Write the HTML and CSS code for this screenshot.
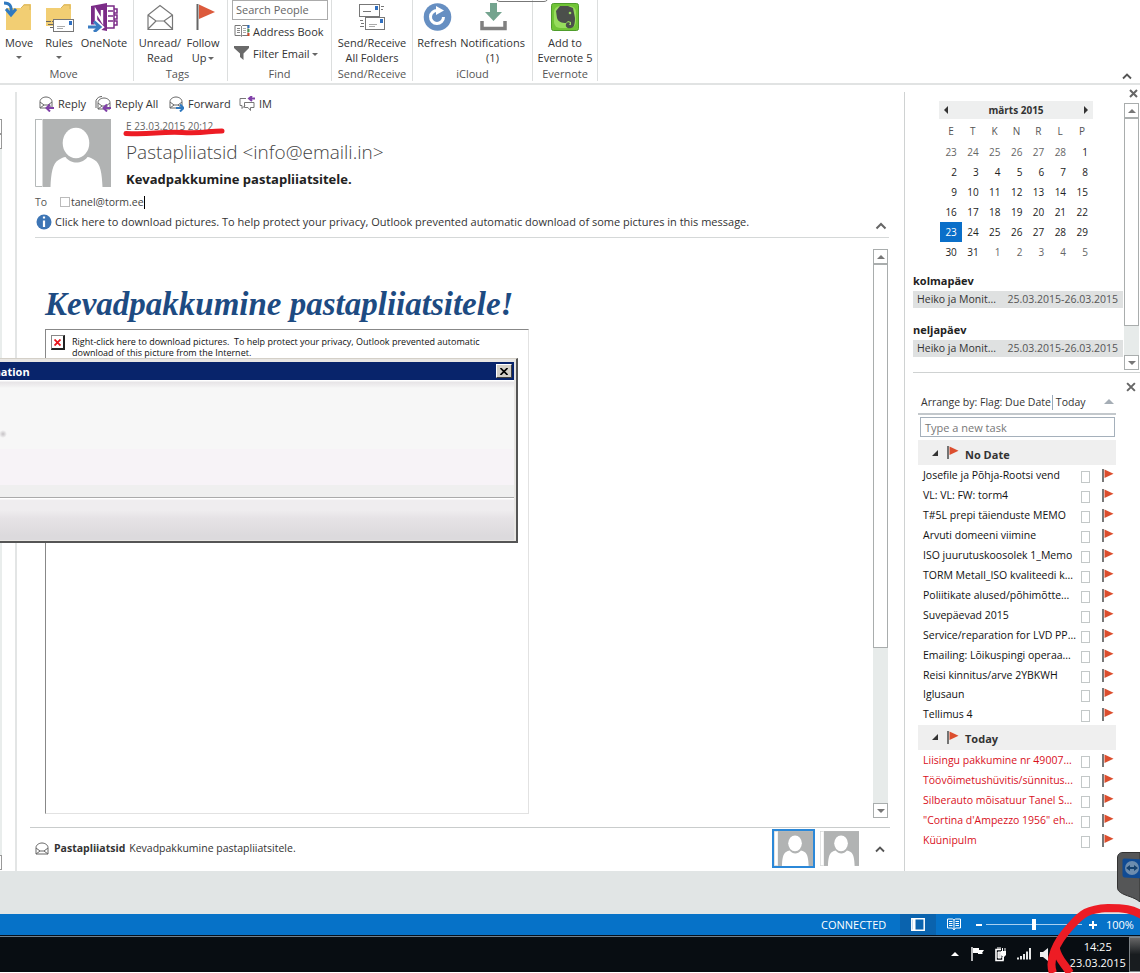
FILE: index.html
```html
<!DOCTYPE html>
<html lang="et">
<head>
    <meta charset="UTF-8" />
    <meta name="viewport" content="width=device-width, initial-scale=1" />
    <title>Outlook</title>
    <link rel="stylesheet" href="styles.css">
</head>
<body>
<svg class="defs" width="0" height="0">
    <defs>
        <symbol id="person" viewBox="0 0 76 68">
            <rect width="76" height="68" fill="#fff"/>
            <path d="M.5 0v67.5H7M.5 .5H7" fill="none" stroke="#b5b9b9"/>
            <rect x="7.500" width="68.500" height="68" fill="#b1b3b3"/>
            <ellipse cx="41" cy="24" rx="13.300" ry="15.300" fill="#fff"/>
            <path d="M15.500 68c.5-13 2-24 8-27 2-1.500 5-3 7-3 3 4 7 5.500 11 5.500s8-1.500 11-5.500c2 0 5 1.500 7 3 6 3 7.500 14 8 27z" fill="#fff"/>
        </symbol>
        <symbol id="mail" viewBox="0 0 14 13">
            <path d="M1 12V5.500C1 3 4 1 7 1s6 2 6 4.500V12zM1 6l4 3h4l4-3M1 12l4-3M13 12L9 9" fill="#fff" stroke="#666"/>
        </symbol>
        <symbol id="flag" viewBox="0 0 12 13">
            <path d="M1 0v13" stroke="#555" stroke-width="1.600"/>
            <path d="M2.500 .5L11.500 4.800L2.500 9z" fill="#dc4e2e"/>
        </symbol>
    </defs>
</svg>

<div class="ribbon">
    <div class="group g-move">
        <div class="tools">
            <div class="btn b-move">
                <svg width="32" height="32" viewBox="0 0 32 32"><path d="M3 8h15l3-4h7v26H3z" fill="#f2ce73"/><path d="M18 8l3-3h6v5" fill="none" stroke="#d9b45c"/><path d="M1 3c6 0 8 3 7 11M3 9l5 6 5-6" fill="none" stroke="#2f79c0" stroke-width="3"/></svg>
                <span>Move</span><i class="caret"></i>
            </div>
            <div class="btn b-rules">
                <svg width="32" height="32" viewBox="0 0 32 32"><path d="M3 8h15l3-4h7v22H3z" fill="#f2ce73"/><path d="M18 8l3-3h6v4" fill="none" stroke="#d9b45c"/><path d="M3 21.500h8M5 24.500h6M7 27.500h4" stroke="#666" stroke-dasharray="5 1"/><rect x="10.500" y="19.500" width="20" height="12" fill="#fff" stroke="#777"/><rect x="26" y="21" width="3" height="4" fill="#2f6fc0"/><path d="M14 26.500h8M14 28.500h6" stroke="#aaa"/></svg>
                <span>Rules</span><i class="caret"></i>
            </div>
            <div class="btn b-note">
                <svg width="32" height="32" viewBox="0 0 32 32"><path d="M17 6h9v22h-9M20 11h5M20 16h5M20 21h5M26 9h3v4h-3M26 15h3v4h-3M26 21h3v4h-3" fill="#fff" stroke="#7b2b87" stroke-width="1.500"/><path d="M3 6l16-3v28L3 28z" fill="#7b2b87"/><path d="M8 21v-10l6 10V10" fill="none" stroke="#fff" stroke-width="2.400"/><path d="M0 27h11M7 21l6 6-6 5" fill="none" stroke="#fff" stroke-width="5"/><path d="M0 27h11M6 21.500l6 5.500-6 5" fill="none" stroke="#3a7cc2" stroke-width="3"/></svg>
                <span>OneNote</span>
            </div>
        </div>
        <div class="group-name">Move</div>
    </div>
    <div class="group g-tags">
        <div class="tools">
            <div class="btn b-unread">
                <svg width="32" height="32" viewBox="0 0 32 32"><path d="M4 29.500V15L16 5.500 28.500 15v14.500zM4 15l8 6h8l8.500-6M4 29l8-8M28.500 29L20 21" fill="#fff" stroke="#777" stroke-width="1.200"/></svg>
                <span>Unread/<br>Read</span>
            </div>
            <div class="btn b-follow">
                <svg width="32" height="32" viewBox="0 0 32 32"><path d="M10.500 4v26" stroke="#666" stroke-width="2"/><path d="M12 4.500L28 12 12 19z" fill="#dc5a3c"/></svg>
                <span>Follow<br>Up<i class="caret"></i></span>
            </div>
        </div>
        <div class="group-name">Tags</div>
    </div>
    <div class="group g-find">
        <div class="tools find">
            <div class="search">Search People</div>
            <div class="find-row">
                <svg width="16" height="14" viewBox="0 0 16 14"><path d="M1 1.500h5.500l1 1 1-1H14v10H8.500l-1 1-1-1H1z" fill="#fff" stroke="#777"/><path d="M7.500 2v10M3 4.500h3M3 6.500h3M3 8.500h3" stroke="#888"/><path d="M9 4.500h3M9 6.500h3M9 8.500h3" stroke="#aaa"/><path d="M14.500 1v3" stroke="#2b6fc0" stroke-width="2"/><path d="M14.500 5v3" stroke="#4a9b52" stroke-width="2"/><path d="M14.500 9v3" stroke="#d04a2a" stroke-width="2"/></svg>
                <span>Address Book</span>
            </div>
            <div class="find-row">
                <svg width="16" height="14" viewBox="0 0 16 14"><path d="M0 0h15v2L9.500 7.500V14L6 11V7.500L0 2z" fill="#6a6a6a"/></svg>
                <span>Filter Email<i class="caret"></i></span>
            </div>
        </div>
        <div class="group-name">Find</div>
    </div>
    <div class="group g-send">
        <div class="tools">
            <div class="btn b-send">
                <svg width="32" height="32" viewBox="0 0 32 32"><rect x="3.500" y="4.500" width="20" height="12" fill="#fff" stroke="#777"/><rect x="19" y="6" width="3" height="4" fill="#2f6fc0"/><path d="M7 11.500h8M25 6.500h3M25 9.500h2M4 20.500h3M5 23.500h3M4 26.500h4" stroke="#777"/><rect x="9.500" y="17.500" width="19" height="12" fill="#fff" stroke="#777"/><rect x="24" y="19" width="3" height="4" fill="#2f6fc0"/><path d="M13 24.500h8M13 26.500h6" stroke="#aaa"/></svg>
                <span>Send/Receive<br>All Folders</span>
            </div>
        </div>
        <div class="group-name">Send/Receive</div>
    </div>
    <div class="group g-cloud">
        <div class="tools">
            <div class="btn b-refresh">
                <svg width="32" height="32" viewBox="0 0 32 32"><circle cx="16.500" cy="17" r="13.800" fill="#668fc2"/><path d="M22.500 17a6.500 6.500 0 1 1-6-6.500" fill="none" stroke="#fff" stroke-width="3"/><path d="M15 6l8 4.500-8 4.500z" fill="#fff"/></svg>
                <span>Refresh</span>
            </div>
            <div class="btn b-notif">
                <svg width="32" height="32" viewBox="0 0 32 32"><path d="M13 3h7v9h5l-8.500 9L8 12h5z" fill="#74a48f"/><path d="M5 21v7.500h23V21" fill="none" stroke="#808080" stroke-width="3.500"/></svg>
                <span>Notifications<br>(1)</span>
            </div>
        </div>
        <div class="group-name">iCloud</div>
    </div>
    <div class="group g-ever">
        <div class="tools">
            <div class="btn b-ever">
                <svg width="32" height="32" viewBox="0 0 32 32"><rect x="2.500" y="3.500" width="27" height="27" rx="2" fill="#71c436" stroke="#4f9d2b"/><rect x="5" y="6" width="22" height="22" rx="6" fill="#97dc5d"/><path d="M7 11l4-5h8l5 2 2 10c0 6-1 10-4 10-3 1-6-1-5-4 1-2 3-2 4-1l-1 2h2v-3l-3-1-2 2c-4 0-8-1-9-5z" fill="#4b4f4b"/><circle cx="21" cy="13" r="1.300" fill="#97dc5d"/></svg>
                <span>Add to<br>Evernote 5</span>
            </div>
        </div>
        <div class="group-name">Evernote</div>
    </div>
    <svg class="collapse" width="10" height="7" viewBox="0 0 10 7"><path d="M1 5.500l4-4 4 4" fill="none" stroke="#555" stroke-width="1.800"/></svg>
    <div class="popup-edge"></div>
</div>

<div class="main">
    <div class="list-edge">
        <div class="edge-box e1"></div>
        <div class="edge-box e2"></div>
        <div class="edge-track"></div>
        <div class="edge-box e3"></div>
    </div>

    <div class="reading">
        <div class="actions">
            <span class="action a-reply"><svg width="15" height="16" viewBox="0 0 15 16"><use href="#mail" width="14" height="13"/><path d="M15 12H8M11 8.500L7.500 12l3.500 3.500" fill="none" stroke="#8040a8" stroke-width="2"/></svg>Reply</span>
            <span class="action a-all"><svg width="16" height="16" viewBox="0 0 16 16"><path d="M1 12V4.500C2 2 4 .5 7 .5" fill="none" stroke="#666"/><use href="#mail" x="2" y="1" width="14" height="13"/><path d="M16 12H9M12 8.500L8.500 12l3.500 3.500" fill="none" stroke="#8040a8" stroke-width="2"/></svg>Reply All</span>
            <span class="action a-fwd"><svg width="15" height="16" viewBox="0 0 15 16"><use href="#mail" width="14" height="13"/><path d="M7 12h7M11 8.500l3.500 3.500-3.500 3.500" fill="none" stroke="#2f79c0" stroke-width="2"/></svg>Forward</span>
            <span class="action"><svg width="16" height="16" viewBox="0 0 16 16"><path d="M7 2.500H1v7h2v3l3-3M15 6.500H5.500v5H9l2.500 3v-3h3.500z" fill="#fff" stroke="#777"/><path d="M16 2.500H10M13 0l-3 2.500 3 2.500" fill="none" stroke="#8040a8" stroke-width="2"/></svg>IM</span>
        </div>

        <div class="head">
            <svg class="avatar" width="76" height="68"><use href="#person" width="76" height="68"/></svg>
            <div class="head-text">
                <div class="date">E 23.03.2015 20:12</div>
                <div class="sender">Pastapliiatsid &lt;info@emaili.in&gt;</div>
                <div class="subject">Kevadpakkumine pastapliiatsitele.</div>
            </div>
            <svg class="underline" width="106" height="12" viewBox="0 0 106 12"><path d="M4 7.500C30 9 35 5.500 60 6.500S85 5 100 5" fill="none" stroke="#ed1c24" stroke-width="5" stroke-linecap="round"/></svg>
        </div>

        <div class="to"><span class="to-label">To</span><i class="presence"></i><span class="to-addr">tanel@torm.ee</span></div>
        <div class="info">
            <svg width="16" height="16" viewBox="0 0 16 16"><circle cx="8" cy="8" r="7.500" fill="#3d75b5"/><path d="M8 2.500v2M8 6.500v6.500" stroke="#fff" stroke-width="2.200"/></svg>
            <span>Click here to download pictures. To help protect your privacy, Outlook prevented automatic download of some pictures in this message.</span>
            <svg class="chev" width="12" height="8" viewBox="0 0 12 8"><path d="M1.500 6.500L6 2l4.500 4.500" fill="none" stroke="#666" stroke-width="2"/></svg>
        </div>

        <div class="message">
            <div class="letter">
                <h1><span>Kevadpakkumine pastapliiatsitele!</span></h1>
                <div class="blocked">
                    <div class="broken"><svg width="7" height="7" viewBox="0 0 7 7"><path d="M.5 .5l6 6M6.500 .5l-6 6" stroke="#e8141c" stroke-width="1.800"/></svg></div>
                    <p>Right-click here to download pictures.&nbsp; To help protect your privacy, Outlook prevented automatic<br>download of this picture from the Internet.</p>
                </div>
            </div>
            <div class="scroll">
                <div class="sb"><i class="up"></i></div>
                <div class="thumb"></div>
                <div class="sb sb-end"><i class="down"></i></div>
            </div>
        </div>

        <div class="people">
            <svg width="14" height="13"><use href="#mail" width="14" height="13"/></svg>
            <span class="p-name">Pastapliiatsid</span>
            <span class="p-text">Kevadpakkumine pastapliiatsitele.</span>
            <div class="photos">
                <div class="photo active"><svg width="39" height="35"><use href="#person" width="39" height="35"/></svg></div>
                <div class="photo"><svg width="39" height="35"><use href="#person" width="39" height="35"/></svg></div>
            </div>
            <svg class="p-chev" width="10" height="8" viewBox="0 0 10 8"><path d="M1 6.500l4-4 4 4" fill="none" stroke="#555" stroke-width="1.800"/></svg>
        </div>
    </div>

    <div class="todo">
        <div class="agenda">
            <div class="agenda-body">
                <div class="cal-title"><i class="left"></i><span>märts 2015</span><i class="right"></i></div>
                <div class="cal" id="cal"></div>
                <div class="day">kolmapäev</div>
                <div class="event"><span>Heiko ja Monit...</span><span class="when">25.03.2015-26.03.2015</span></div>
                <div class="day day2">neljapäev</div>
                <div class="event"><span>Heiko ja Monit...</span><span class="when">25.03.2015-26.03.2015</span></div>
            </div>
            <div class="agenda-side">
                <svg class="x" width="9" height="9" viewBox="0 0 9 9"><path d="M1 1l7 7M8 1L1 8" stroke="#666" stroke-width="2"/></svg>
                <div class="scroll cal-scroll">
                    <div class="sb"><i class="up"></i></div>
                    <div class="thumb"></div>
                    <div class="sb sb-end"><i class="down"></i></div>
                </div>
            </div>
        </div>
        <div class="tasks">
            <svg class="x x2" width="10" height="10" viewBox="0 0 9 9"><path d="M1 1l7 7M8 1L1 8" stroke="#666" stroke-width="1.800"/></svg>
            <div class="arrange"><span class="by">Arrange by: Flag: Due Date</span><span class="today">Today</span><i class="sort"></i></div>
            <div class="new-task">Type a new task</div>
            <div class="task-head"><i class="open"></i><svg width="12" height="13"><use href="#flag" width="12" height="13"/></svg><span>No Date</span></div>
            <div class="task-list" id="noDate"></div>
            <div class="task-head"><i class="open"></i><svg width="12" height="13"><use href="#flag" width="12" height="13"/></svg><span>Today</span></div>
            <div class="task-list late" id="today"></div>
        </div>
    </div>
</div>

<div class="spacer"></div>

<div class="status">
    <span class="connected">CONNECTED</span>
    <div class="view active"><svg width="14" height="13" viewBox="0 0 14 13"><path d="M.8 .8h12.400v11.400H.8z" fill="none" stroke="#fff" stroke-width="1.500"/><path d="M3 1v11" stroke="#fff" stroke-width="3"/></svg></div>
    <div class="view"><svg width="14" height="13" viewBox="0 0 14 13"><path d="M.5 1h5l1.500 1 1.500-1h5v9h-5L7 12l-1.500-2h-5zM7 2v9" fill="none" stroke="#fff"/><path d="M2 3.500h3.500M2 5.500h3.500M2 7.500h3.500M8.500 3.500H12M8.500 5.500H12M8.500 7.500H12" stroke="#fff"/></svg></div>
    <div class="zoom"><i class="minus"></i><i class="line"><i class="knob"></i></i><i class="plus"></i></div>
    <span class="percent">100%</span>
</div>

<div class="taskbar">
    <svg class="t-up" width="8" height="4" viewBox="0 0 8 4"><path d="M4 0l4 4H0z" fill="#fff"/></svg>
    <svg class="t-flag" width="14" height="14" viewBox="0 0 14 14"><path d="M1 0v14" stroke="#fff" stroke-width="1.400"/><path d="M2 1h6v2h5l-2 3 1 1H7V6H2z" fill="#fff"/></svg>
    <svg class="t-plug" width="13" height="15" viewBox="0 0 13 15"><path d="M7 2.500H2v11h7V10" fill="none" stroke="#fff" stroke-width="1.600"/><path d="M3 1h4M4 5h3v6H4z" fill="#ddd" stroke="#fff"/><path d="M7 4h5v4l-2 2v3h-1v-3L7 8z" fill="#fff"/><path d="M8.500 1v3M11 1v3" stroke="#fff"/></svg>
    <svg class="t-net" width="14" height="12" viewBox="0 0 14 12"><path d="M1 9.500v2M4 8v3.500M7 6v5.500M10 3.500v8M13 0v11.500" stroke="#fff" stroke-width="1.800"/></svg>
    <svg class="t-vol" width="9" height="13" viewBox="0 0 9 13"><path d="M0 4h3l5-4v13L3 9H0z" fill="#eee"/></svg>
    <div class="clock">14:25<br>23.03.2015</div>
    <div class="desktop"></div>
</div>

<div class="dialog">
    <div class="dialog-title"><span>mation</span><div class="dialog-close"><svg width="8" height="7" viewBox="0 0 8 7"><path d="M.5 0l7 7M7.500 0l-7 7" stroke="#000" stroke-width="1.600"/></svg></div></div>
    <div class="dialog-body"><i class="smudge"></i></div>
    <div class="dialog-foot"></div>
</div>

<svg class="viewer" width="23" height="50" viewBox="0 0 23 50"><path d="M23 .5H6C2 .5 .5 3 .5 6v29c0 3 1 4 3 5.500 6 4 13 4 19.500 9.500z" fill="#555657" stroke="#333"/><rect x="5.500" y="6" width="20" height="19" rx="2" fill="#104b94" transform="skewY(3)"/><circle cx="15" cy="16" r="7" fill="#6c8cae"/><path d="M9 16l4-3v2h4v-2l4 3-4 3v-2h-4v2z" fill="#15416f"/></svg>

<svg class="circle-mark" width="100" height="73" viewBox="0 0 100 73"><path d="M13 73C8 60 16 42 30 27 42 13 48 9 68 8c16 0 24 1 34 7M16 49c2 10 8 14 14 24" fill="none" stroke="#ed1c24" stroke-width="8"/></svg>

<script>
    const weeks = [
        ["E", "T", "K", "N", "R", "L", "P"],
        [23, 24, 25, 26, 27, 28, 1],
        [2, 3, 4, 5, 6, 7, 8],
        [9, 10, 11, 12, 13, 14, 15],
        [16, 17, 18, 19, 20, 21, 22],
        [23, 24, 25, 26, 27, 28, 29],
        [30, 31, 1, 2, 3, 4, 5],
    ];
    const cal = document.getElementById("cal");
    weeks.forEach((week, r) => {
        week.forEach((d, c) => {
            const cell = document.createElement("span");
            cell.textContent = d;
            if (r === 0) cell.className = "dow";
            if ((r === 1 && c < 6) || (r === 6 && c > 1)) cell.className = "other";
            if (r === 5 && c === 0) cell.className = "selected";
            cal.appendChild(cell);
        });
    });

    const noDate = ["Josefile ja Põhja-Rootsi vend", "VL: VL: FW: torm4", "T#5L prepi täienduste MEMO",
        "Arvuti domeeni viimine", "ISO juurutuskoosolek 1_Memo", "TORM Metall_ISO kvaliteedi k...",
        "Poliitikate alused/põhimõtte...", "Suvepäevad 2015", "Service/reparation for LVD PP...",
        "Emailing: Lõikuspingi operaa...", "Reisi kinnitus/arve 2YBKWH", "Iglusaun", "Tellimus 4"];
    const today = ["Liisingu pakkumine nr 49007...", "Töövõimetushüvitis/sünnitus...",
        "Silberauto mõisatuur Tanel S...", "\"Cortina d'Ampezzo 1956\" eh...", "Küünipulm"];

    function fill(id, items) {
        document.getElementById(id).innerHTML = items.map(t =>
            `<div class="task"><span>${t}</span><i class="box"></i><svg width="12" height="13"><use href="#flag" width="12" height="13"/></svg></div>`
        ).join("");
    }
    fill("noDate", noDate);
    fill("today", today);
</script>
</body>
</html>
```
FILE: styles.css
```css
* {
    box-sizing: border-box;
}
body {
    margin: 0;
    width: 1140px;
    height: 973px;
    overflow: hidden;
    position: relative;
    background: #fff;
    font-family: "Open Sans", "Noto Sans", sans-serif;
    font-size: 11px;
    line-height: 15px;
    color: #333;
    white-space: nowrap;
}
svg {
    display: block;
    flex: none;
}
.defs {
    position: absolute;
}

/* ribbon */
.ribbon {
    display: flex;
    height: 85px;
    border-bottom: 2px solid #e1e3e3;
    position: relative;
}
.group {
    height: 81px;
    border-right: 1px solid #dcdede;
    display: flex;
    flex-direction: column;
}
.g-move { width: 134px; }
.g-tags { width: 94px; }
.g-find { width: 104px; }
.g-send { width: 81px; }
.g-cloud { width: 120px; }
.g-ever { width: 65px; }
.tools {
    display: flex;
    height: 68px;
}
.group-name {
    text-align: center;
    color: #555;
    padding-right: 6px;
}
.g-find .group-name,
.g-send .group-name,
.g-cloud .group-name,
.g-ever .group-name {
    padding-right: 0;
}
.btn {
    display: flex;
    flex-direction: column;
    align-items: center;
    text-align: center;
    flex: none;
}
.btn span {
    margin-top: 3px;
}
.b-move { width: 38px; }
.b-rules { width: 42px; }
.b-note { width: 48px; }
.b-unread { width: 52px; }
.b-follow { width: 34px; }
.b-send { width: 80px; }
.b-refresh { width: 48px; }
.b-notif { width: 63px; }
.b-ever { width: 64px; }
.caret {
    display: inline-block;
    border: 3px solid transparent;
    border-top-color: #666;
    border-bottom: 0;
    vertical-align: 2px;
    margin-left: 2px;
}
.btn > .caret {
    margin: 6px 0 0;
}
.find {
    flex-direction: column;
    padding-left: 4px;
}
.search {
    width: 96px;
    height: 20px;
    border: 1px solid #ababab;
    padding: 1px 3px;
    color: #666;
}
.find-row {
    display: flex;
    align-items: center;
    height: 22px;
    padding-left: 2px;
    gap: 3px;
}
.collapse {
    position: absolute;
    left: 1122px;
    top: 73px;
}
.popup-edge {
    position: absolute;
    left: 495px;
    top: -9px;
    width: 54px;
    height: 11px;
    border: 1px solid #777;
    border-radius: 5px;
}

/* main area */
.main {
    display: flex;
    height: 786px;
}
.list-edge {
    width: 17px;
    border-right: 2px solid #e3e5e5;
    margin-top: 7px;
}
.edge-box {
    width: 2px;
    height: 14px;
    border: 1px solid #999;
    border-left: 0;
}
.e1 { margin-top: 27px; height: 15px; }
.e2 { height: 15px; }
.e3 { height: 15px; }
.edge-track {
    width: 2px;
    height: 706px;
    background: #e9edec;
}
.reading {
    width: 887px;
    padding-left: 18px;
    display: flex;
    flex-direction: column;
}
.actions {
    display: flex;
    padding-left: 4px;
    height: 33px;
    padding-top: 11px;
}
.action {
    display: flex;
    gap: 4px;
    line-height: 16px;
}
.a-reply { width: 56px; }
.a-all { width: 74px; }
.a-fwd { width: 70px; }
.head {
    display: flex;
    height: 72px;
    position: relative;
    padding-top: 1px;
}
.head-text {
    padding-left: 15px;
}
.date {
    font-size: 10px;
    color: #666;
}
.sender {
    font-weight: 300;
    font-size: 19px;
    line-height: 26px;
    margin-top: 5px;
    color: #444;
}
.subject {
    font-weight: 700;
    font-size: 13px;
    line-height: 18px;
    margin-top: 5px;
    color: #222;
}
.underline {
    position: absolute;
    left: 87px;
    top: 8px;
}
.to {
    display: flex;
    height: 24px;
    align-items: center;
    font-size: 10.500px;
    color: #555;
}
.to-label {
    width: 25px;
}
.presence {
    width: 10px;
    height: 10px;
    border: 1px solid #bbb;
    margin-right: 1px;
}
.to-addr {
    border-right: 1px solid #000;
    line-height: 13px;
    color: #444;
}
.info {
    display: flex;
    height: 24px;
    gap: 3px;
    border-bottom: 1px solid #d5d8d8;
    width: 854px;
    padding-left: 1px;
}
.info .chev {
    margin: 8px 2px 0 auto;
}
.message {
    display: flex;
    height: 589px;
    width: 854px;
    padding: 11px 1px 9px 10px;
}
.letter {
    width: 484px;
    margin-right: auto;
}
.letter h1 {
    margin: 0;
    height: 80px;
    padding-top: 35px;
    font-family: "Liberation Serif", serif;
    font-style: italic;
    font-weight: 700;
    font-size: 33px;
    line-height: 40px;
    color: #1d4b82;
}
.blocked {
    height: 485px;
    border: 1px solid #e2e2e2;
    border-left-color: #888;
    border-top-color: #888;
    display: flex;
    padding: 5px;
}
.broken {
    width: 14px;
    height: 15px;
    border: 1px solid #888;
    border-right: 2px solid #222;
    border-bottom: 2px solid #222;
    display: flex;
    align-items: center;
    justify-content: center;
}
.blocked p {
    margin: 1px 0 0 7px;
    font-size: 9px;
    line-height: 11px;
    color: #111;
}
.scroll {
    width: 15px;
    background: #e7ebea;
    display: flex;
    flex-direction: column;
}
.sb {
    height: 15px;
    border: 1px solid #a9adad;
    background: #fff;
    display: flex;
    align-items: center;
    justify-content: center;
}
.sb-end {
    margin-top: auto;
}
.thumb {
    height: 384px;
    border: 1px solid #a9adad;
    background: #fff;
}
.up, .down {
    border: 4px solid transparent;
    border-bottom-color: #777;
    border-top: 0;
}
.down {
    border-top: 4px solid #777;
    border-bottom: 0;
}
.people {
    display: flex;
    align-items: center;
    margin-left: -5px;
    width: 860px;
    height: 42px;
    border-top: 1px solid #c9cccc;
    padding-left: 5px;
    font-size: 10.500px;
}
.p-name {
    font-weight: 700;
    margin-left: 5px;
}
.p-text {
    margin-left: 4px;
}
.photos {
    display: flex;
    gap: 3px;
    margin-left: auto;
}
.photo {
    padding: 2px;
    width: 43px;
    height: 39px;
}
.photo.active {
    outline: 2px solid #2b88d8;
    outline-offset: -2px;
}
.p-chev {
    margin: 0 5px 0 14px;
}

/* to-do bar */
.todo {
    width: 236px;
    border-left: 1px solid #cfd2d2;
    margin-top: 7px;
    display: flex;
    flex-direction: column;
}
.agenda {
    display: flex;
    height: 281px;
    margin-left: 8px;
    border-bottom: 1px solid #cfd2d2;
}
.agenda-body {
    width: 210px;
    padding-top: 9px;
}
.agenda-side {
    padding-left: 1px;
}
.x {
    margin: -3px 0 0 5px;
}
.cal-scroll {
    height: 267px;
    margin-top: 5px;
}
.cal-scroll .thumb {
    height: 208px;
}
.cal-title {
    display: flex;
    align-items: center;
    justify-content: space-between;
    width: 154px;
    height: 18px;
    margin-left: 26px;
    padding: 0 5px;
    background: #eeefef;
    font-weight: 700;
    font-size: 10px;
}
.left, .right {
    border: 4px solid transparent;
    border-right-color: #333;
    border-left: 0;
}
.right {
    border-left: 4px solid #333;
    border-right: 0;
}
.cal {
    display: grid;
    grid-template-columns: repeat(7, 21.850px);
    grid-template-rows: 23px repeat(6, 20px);
    margin-left: 27px;
    line-height: 20px;
    font-size: 10px;
    text-align: right;
    color: #222;
}
.cal span {
    padding-right: 5px;
}
.cal .dow {
    text-align: center;
    line-height: 25px;
    padding-right: 0;
    color: #555;
}
.cal .other {
    color: #666;
}
.cal .selected {
    background: #0a6fc9;
    color: #fff;
}
.day {
    font-weight: 700;
    margin-top: 10px;
    height: 19px;
    line-height: 18px;
    color: #222;
}
.day2 {
    margin-top: 13px;
}
.event {
    display: flex;
    justify-content: space-between;
    height: 17px;
    line-height: 16px;
    background: #dfe1e1;
    padding: 0 5px 0 4px;
    font-size: 10.500px;
}
.when {
    color: #555;
}
.tasks {
    padding-left: 13px;
}
.x2 {
    margin: 9px 0 0 208px;
}
.arrange {
    display: flex;
    align-items: center;
    width: 198px;
    height: 23px;
    border-bottom: 2px solid #c3c8cc;
    padding-left: 3px;
    font-size: 10.500px;
    margin-bottom: 2px;
}
.today {
    border-left: 1px solid #9ab;
    margin-left: 1px;
    padding-left: 3px;
}
.sort {
    border: 5px solid transparent;
    border-bottom-color: #a5adb5;
    border-top: 0;
    margin: -3px 2px 0 auto;
}
.new-task {
    width: 195px;
    height: 20px;
    margin-left: 2px;
    border: 1px solid #a5b0bb;
    padding: 2px 4px;
    color: #777;
}
.task-head {
    display: flex;
    align-items: center;
    width: 198px;
    height: 25px;
    background: #efefef;
    padding-left: 14px;
    font-weight: 700;
    margin-top: 3px;
}
.task-list + .task-head {
    margin-top: 0;
}
.open {
    border: 3px solid transparent;
    border-right-color: #333;
    border-bottom-color: #333;
    margin-right: 9px;
}
.task-head span {
    margin-left: 6px;
    padding-top: 3px;
}
.task-list {
    padding-top: 1px;
}
.task {
    display: flex;
    align-items: center;
    height: 19.920px;
    padding-left: 5px;
    color: #111;
    font-size: 10.500px;
}
.task span {
    width: 158px;
}
.late .task {
    color: #d9101c;
}
.box {
    width: 9px;
    height: 12px;
    border: 1px solid #c3c8c8;
    margin: 3px 12px 0 0;
}
.spacer {
    height: 43px;
    background: #e1e5e5;
}

/* status bar */
.status {
    display: flex;
    align-items: center;
    height: 21px;
    background: #0672c8;
    color: #fff;
    padding-left: 821px;
}
.connected {
    width: 79px;
}
.view {
    width: 36px;
    height: 21px;
    display: flex;
    align-items: center;
    justify-content: center;
}
.view.active {
    background: #0a63ae;
}
.zoom {
    display: flex;
    align-items: center;
    margin-left: 4px;
    width: 130px;
}
.minus {
    width: 6px;
    height: 2px;
    background: #fff;
}
.line {
    width: 96px;
    height: 1px;
    background: #a9d0f0;
    margin: 0 7px 0 4px;
    display: flex;
    align-items: center;
    justify-content: center;
}
.knob {
    width: 4px;
    height: 11px;
    background: #fff;
    flex: none;
}
.plus {
    width: 8px;
    height: 8px;
    background: linear-gradient(#fff, #fff) center / 8px 2px no-repeat, linear-gradient(#fff, #fff) center / 2px 8px no-repeat;
}
.taskbar {
    display: flex;
    align-items: center;
    height: 37px;
    background: #080d12;
    border-top: 1px solid #06101a;
    box-shadow: inset 0 1px #6d7f8d;
    padding-left: 951px;
    color: #fff;
}
.t-flag { margin-left: 12px; }
.t-plug { margin-left: 9px; }
.t-net { margin-left: 10px; }
.t-vol { margin-left: 9px; }
.clock {
    width: 72px;
    margin-left: 17px;
    margin-top: 1px;
    line-height: 16px;
    text-align: center;
}
.desktop {
    margin-left: auto;
    width: 12px;
    height: 35px;
    margin-top: 1px;
    border: 1px solid #7d8488;
    border-right: 0;
    background: linear-gradient(#666, #181c1f 50%);
}

/* dialog window over the message */
.dialog {
    position: absolute;
    left: -4px;
    top: 358px;
    width: 522px;
    height: 185px;
    padding: 3px 2px 2px;
    background: #e8e6e3;
    border: 1px solid #d4d0c8;
    border-right: 2px solid #555;
    border-bottom: 2px solid #555;
}
.dialog-title {
    display: flex;
    justify-content: space-between;
    align-items: center;
    height: 18px;
    background: #08246b;
    color: #fff;
    font-weight: 700;
    padding: 0 2px 0 0;
}
.dialog-title span {
    margin-left: -9px;
}
.dialog-close {
    width: 16px;
    height: 14px;
    background: #d4d0c8;
    border: 1px solid #fff;
    border-right-color: #404040;
    border-bottom-color: #404040;
    display: flex;
    align-items: center;
    justify-content: center;
}
.dialog-body {
    height: 118px;
    padding-top: 50px;
    background: linear-gradient(#fff 0 1px, #e6e4e6 2px, #f0eff0 6px, #f7f7f7 8px 69px, #f7f3f7 69px 105px, #efefef 105px);
    border-bottom: 1px solid #aaa;
}
.smudge {
    display: block;
    width: 8px;
    height: 8px;
    border-radius: 50%;
    background: radial-gradient(#c5c2c5, #f7f7f7 70%);
}
.dialog-foot {
    height: 42px;
    background: linear-gradient(#fff 0 1px, #efedef 2px 12px, #e6e3e6 20px, #dcdadd 38px);
}

/* side tab and pen marks */
.viewer {
    position: absolute;
    left: 1117px;
    top: 852px;
}
.circle-mark {
    position: absolute;
    left: 1040px;
    top: 900px;
}
```
